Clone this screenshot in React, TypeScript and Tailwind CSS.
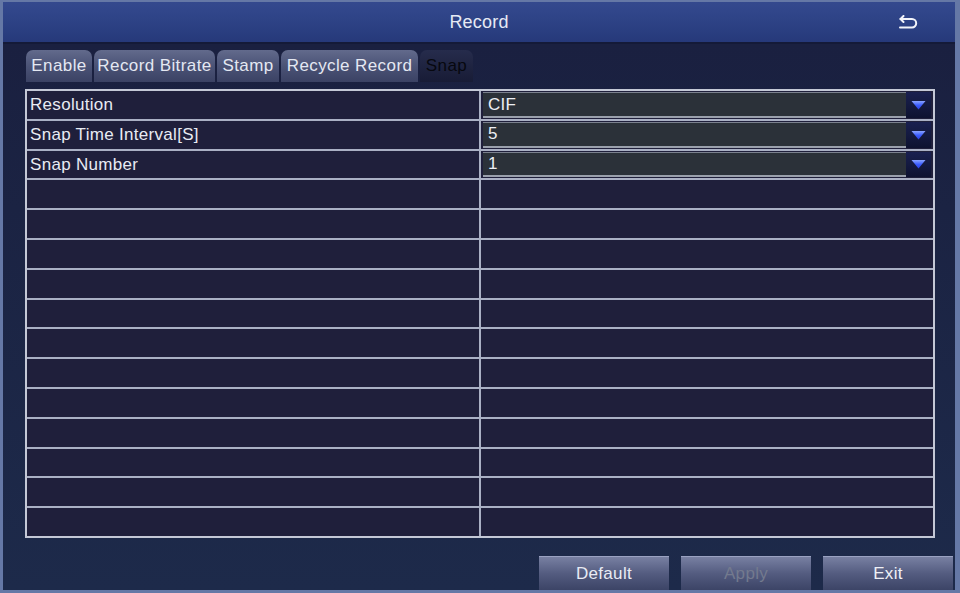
import React from "react";

const tabs = [
  { label: "Enable", w: "w-[66px]" },
  { label: "Record Bitrate", w: "w-[121px]" },
  { label: "Stamp", w: "w-[62px]" },
  { label: "Recycle Record", w: "w-[137px]" },
];

const rows: { label: string; value?: string }[] = [
  { label: "Resolution", value: "CIF" },
  { label: "Snap Time Interval[S]", value: "5" },
  { label: "Snap Number", value: "1" },
  ...Array.from({ length: 12 }, () => ({ label: "" })),
];

function ReturnIcon() {
  return (
    <svg width="22" height="16" viewBox="0 0 22 16" fill="none">
      <path d="M3.5 4 H15 a4.2 4.2 0 0 1 0 8.4 H3" stroke="#f2f4fa" strokeWidth="2" strokeLinecap="round" />
      <path d="M6.5 1 L3.5 4 L6.5 7" stroke="#f2f4fa" strokeWidth="2" strokeLinecap="round" strokeLinejoin="round" />
    </svg>
  );
}

function DropArrow() {
  return (
    <div className="w-[25px] h-full flex items-center justify-center bg-gradient-to-b from-[#1a2050] via-[#141a40] to-[#0e1230]">
      <svg width="15" height="10" viewBox="0 0 15 10">
        <defs>
          <linearGradient id="tri" x1="0" y1="0" x2="0" y2="1">
            <stop offset="0" stopColor="#8aa4ff" />
            <stop offset="0.5" stopColor="#3b5cff" />
            <stop offset="1" stopColor="#2a40e0" />
          </linearGradient>
        </defs>
        <path d="M0.5 1 H14.5 L7.5 9.5 Z" fill="url(#tri)" />
      </svg>
    </div>
  );
}

export default function App() {
  return (
    <div
      className="w-[960px] h-[593px] bg-[#6578a6] pt-[2px] pl-[3px] pr-[5px] pb-[3px] flex flex-col overflow-hidden"
      style={{ fontFamily: '"Liberation Sans", Arial, sans-serif' }}
    >
      {/* Title bar */}
      <div className="relative h-[42px] shrink-0 bg-gradient-to-b from-[#34498e] via-[#2d4285] to-[#26397a] border-b-2 border-[#141a38] flex items-center justify-center">
        <span className="text-[18px] tracking-[0.2px] text-[#e6eaf4]">Record</span>
        <div className="absolute right-[36px] top-[13px]">
          <ReturnIcon />
        </div>
      </div>

      {/* Body */}
      <div className="flex-1 flex flex-col bg-gradient-to-b from-[#1a2040] to-[#1d2a4a] pl-[22px] pr-[16px]">
        {/* Tabs */}
        <div className="flex items-end gap-[2px] mt-[6px] h-[32px] pl-[1px]">
          {tabs.map((t) => (
            <div
              key={t.label}
              className={`${t.w} h-[32px] rounded-t-[7px] bg-gradient-to-b from-[#626a8c] via-[#4b5376] to-[#3b4264] flex items-center justify-center text-[17px] tracking-[0.4px] text-[#e4e8f2] whitespace-nowrap`}
            >
              {t.label}
            </div>
          ))}
          <div className="w-[53px] h-[32px] rounded-t-[7px] bg-gradient-to-b from-[#262c4c] to-[#181c36] flex items-center justify-center text-[17px] tracking-[0.4px] text-[#07080f]">
            Snap
          </div>
        </div>

        {/* Table */}
        <div className="mt-[7px] w-[910px] h-[449px] border-2 border-[#c4c8d6] flex flex-col bg-[#1f1f3b]">
          {rows.map((r, i) => (
            <div
              key={i}
              className={`flex-1 min-h-0 flex ${i > 0 ? "border-t-2 border-[#aab0c4]" : ""}`}
            >
              <div className="w-[454px] border-r-2 border-[#aab0c4] flex items-center pl-[3px] text-[17px] tracking-[0.3px] text-[#e8ebf3] whitespace-nowrap">
                {r.label}
              </div>
              <div className="flex-1 min-h-0 flex items-stretch pl-[2px] pr-[2px] py-[1px]">
                {r.value !== undefined && (
                  <div className="flex-1 flex items-stretch">
                    <div className="flex-1 bg-[#2b3139] border-t border-[#7b818e] border-b-2 border-b-[#9aa0ac] flex items-center pl-[5px] text-[17px] tracking-[0.3px] text-[#eceef4]">
                      {r.value}
                    </div>
                    <DropArrow />
                  </div>
                )}
              </div>
            </div>
          ))}
        </div>

        {/* Footer buttons */}
        <div className="flex-1 flex justify-end items-end gap-[12px] -mr-[14px]">
          <div className="w-[130px] h-[34px] bg-gradient-to-b from-[#7880a2] via-[#545c80] to-[#3c4466] border-t border-[#9aa2c2] flex items-center justify-center text-[17px] tracking-[0.3px] text-[#e8ebf3]">
            Default
          </div>
          <div className="w-[130px] h-[34px] bg-gradient-to-b from-[#7880a2] via-[#545c80] to-[#3c4466] border-t border-[#9aa2c2] flex items-center justify-center text-[17px] tracking-[0.3px] text-[#737a8e]">
            Apply
          </div>
          <div className="w-[130px] h-[34px] bg-gradient-to-b from-[#7880a2] via-[#545c80] to-[#3c4466] border-t border-[#9aa2c2] flex items-center justify-center text-[17px] tracking-[0.3px] text-[#eef0f6]">
            Exit
          </div>
        </div>
      </div>
    </div>
  );
}
